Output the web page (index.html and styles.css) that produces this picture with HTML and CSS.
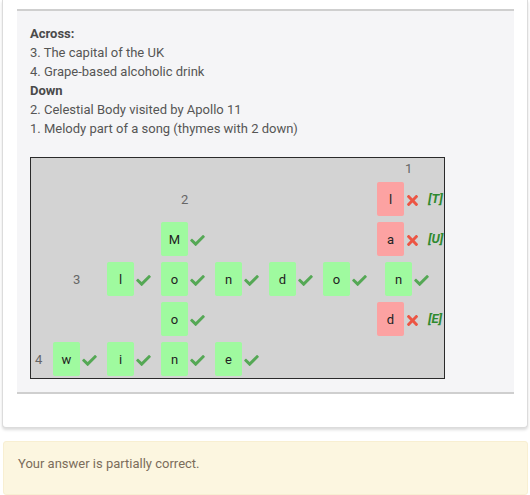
FILE: index.html
```html
<!DOCTYPE html>
<html>
<head>
<meta charset="utf-8">
<link rel="stylesheet" href="styles.css">
</head>
<body>
<div class="card">
  <div class="panel">
    <div class="clues">
      <div class="head">Across:</div>
      <div>3. The capital of the UK</div>
      <div>4. Grape-based alcoholic drink</div>
      <div class="head">Down</div>
      <div>2. Celestial Body visited by Apollo 11</div>
      <div>1. Melody part of a song (thymes with 2 down)</div>
    </div>
    <div class="board">
      <!-- row 0 -->
      <div class="cell r0 c7"><span class="num n1">1</span></div>
      <!-- row 1 -->
      <div class="cell r1 c3"><span class="num n2">2</span></div>
      <div class="cell r1 c7"><span class="box bad">l</span><svg class="x" viewBox="0 80 352 352"><path d="M242.72 256l100.07-100.07c12.28-12.28 12.28-32.19 0-44.48l-22.24-22.24c-12.28-12.28-32.19-12.28-44.48 0L176 189.28 75.930 89.21c-12.28-12.28-32.19-12.28-44.48 0L9.21 111.45c-12.28 12.28-12.28 32.19 0 44.48L109.28 256 9.21 356.070c-12.28 12.28-12.28 32.19 0 44.48l22.24 22.24c12.28 12.28 32.2 12.28 44.48 0L176 322.72l100.07 100.07c12.28 12.28 32.2 12.28 44.48 0l22.24-22.24c12.28-12.28 12.28-32.19 0-44.48L242.72 256z"/></svg><span class="fix">[T]</span></div>
      <!-- row 2 -->
      <div class="cell r2 c3"><span class="box ok">M</span><svg class="ck" viewBox="0 64 512 384"><path d="M173.9 439.4l-166.4-166.4c-10-10-10-26.2 0-36.2l36.2-36.2c10-10 26.2-10 36.2 0L192 312.7 432.1 72.6c10-10 26.2-10 36.2 0l36.2 36.2c10 10 10 26.2 0 36.2l-294.4 294.4c-10 10-26.2 10-36.2 0z"/></svg></div>
      <div class="cell r2 c7"><span class="box bad">a</span><svg class="x" viewBox="0 80 352 352"><path d="M242.72 256l100.07-100.07c12.28-12.28 12.28-32.19 0-44.48l-22.24-22.24c-12.28-12.28-32.19-12.28-44.48 0L176 189.28 75.930 89.21c-12.28-12.28-32.19-12.28-44.48 0L9.21 111.45c-12.28 12.28-12.28 32.19 0 44.48L109.28 256 9.21 356.070c-12.28 12.28-12.28 32.19 0 44.48l22.24 22.24c12.28 12.28 32.2 12.28 44.48 0L176 322.72l100.07 100.07c12.28 12.28 32.2 12.28 44.48 0l22.24-22.24c12.28-12.28 12.28-32.19 0-44.48L242.72 256z"/></svg><span class="fix">[U]</span></div>
      <!-- row 3 -->
      <div class="cell r3 c1"><span class="num n3">3</span></div>
      <div class="cell r3 c2"><span class="box ok">l</span><svg class="ck" viewBox="0 64 512 384"><path d="M173.9 439.4l-166.4-166.4c-10-10-10-26.2 0-36.2l36.2-36.2c10-10 26.2-10 36.2 0L192 312.7 432.1 72.6c10-10 26.2-10 36.2 0l36.2 36.2c10 10 10 26.2 0 36.2l-294.4 294.4c-10 10-26.2 10-36.2 0z"/></svg></div>
      <div class="cell r3 c3"><span class="box ok">o</span><svg class="ck" viewBox="0 64 512 384"><path d="M173.9 439.4l-166.4-166.4c-10-10-10-26.2 0-36.2l36.2-36.2c10-10 26.2-10 36.2 0L192 312.7 432.1 72.6c10-10 26.2-10 36.2 0l36.2 36.2c10 10 10 26.2 0 36.2l-294.4 294.4c-10 10-26.2 10-36.2 0z"/></svg></div>
      <div class="cell r3 c4"><span class="box ok">n</span><svg class="ck" viewBox="0 64 512 384"><path d="M173.9 439.4l-166.4-166.4c-10-10-10-26.2 0-36.2l36.2-36.2c10-10 26.2-10 36.2 0L192 312.7 432.1 72.6c10-10 26.2-10 36.2 0l36.2 36.2c10 10 10 26.2 0 36.2l-294.4 294.4c-10 10-26.2 10-36.2 0z"/></svg></div>
      <div class="cell r3 c5"><span class="box ok">d</span><svg class="ck" viewBox="0 64 512 384"><path d="M173.9 439.4l-166.4-166.4c-10-10-10-26.2 0-36.2l36.2-36.2c10-10 26.2-10 36.2 0L192 312.7 432.1 72.6c10-10 26.2-10 36.2 0l36.2 36.2c10 10 10 26.2 0 36.2l-294.4 294.4c-10 10-26.2 10-36.2 0z"/></svg></div>
      <div class="cell r3 c6"><span class="box ok">o</span><svg class="ck" viewBox="0 64 512 384"><path d="M173.9 439.4l-166.4-166.4c-10-10-10-26.2 0-36.2l36.2-36.2c10-10 26.2-10 36.2 0L192 312.7 432.1 72.6c10-10 26.2-10 36.2 0l36.2 36.2c10 10 10 26.2 0 36.2l-294.4 294.4c-10 10-26.2 10-36.2 0z"/></svg></div>
      <div class="cell r3 c7 shift"><span class="box ok">n</span><svg class="ck" viewBox="0 64 512 384"><path d="M173.9 439.4l-166.4-166.4c-10-10-10-26.2 0-36.2l36.2-36.2c10-10 26.2-10 36.2 0L192 312.7 432.1 72.6c10-10 26.2-10 36.2 0l36.2 36.2c10 10 10 26.2 0 36.2l-294.4 294.4c-10 10-26.2 10-36.2 0z"/></svg></div>
      <!-- row 4 -->
      <div class="cell r4 c3"><span class="box ok">o</span><svg class="ck" viewBox="0 64 512 384"><path d="M173.9 439.4l-166.4-166.4c-10-10-10-26.2 0-36.2l36.2-36.2c10-10 26.2-10 36.2 0L192 312.7 432.1 72.6c10-10 26.2-10 36.2 0l36.2 36.2c10 10 10 26.2 0 36.2l-294.4 294.4c-10 10-26.2 10-36.2 0z"/></svg></div>
      <div class="cell r4 c7"><span class="box bad">d</span><svg class="x" viewBox="0 80 352 352"><path d="M242.72 256l100.07-100.07c12.28-12.28 12.28-32.19 0-44.48l-22.24-22.24c-12.28-12.280-32.19-12.28-44.48 0L176 189.28 75.930 89.21c-12.28-12.28-32.19-12.28-44.48 0L9.21 111.45c-12.28 12.28-12.28 32.19 0 44.48L109.28 256 9.21 356.070c-12.28 12.28-12.28 32.19 0 44.48l22.24 22.24c12.28 12.28 32.2 12.28 44.48 0L176 322.72l100.07 100.07c12.28 12.28 32.2 12.28 44.48 0l22.24-22.24c12.28-12.28 12.28-32.19 0-44.48L242.72 256z"/></svg><span class="fix">[E]</span></div>
      <!-- row 5 -->
      <div class="cell r5 c0"><span class="num n4">4</span></div>
      <div class="cell r5 c1"><span class="box ok">w</span><svg class="ck" viewBox="0 64 512 384"><path d="M173.9 439.4l-166.4-166.4c-10-10-10-26.2 0-36.2l36.2-36.2c10-10 26.2-10 36.2 0L192 312.7 432.1 72.6c10-10 26.2-10 36.2 0l36.2 36.2c10 10 10 26.2 0 36.2l-294.4 294.4c-10 10-26.2 10-36.2 0z"/></svg></div>
      <div class="cell r5 c2"><span class="box ok">i</span><svg class="ck" viewBox="0 64 512 384"><path d="M173.9 439.4l-166.4-166.4c-10-10-10-26.2 0-36.2l36.2-36.2c10-10 26.2-10 36.2 0L192 312.7 432.1 72.6c10-10 26.2-10 36.2 0l36.2 36.2c10 10 10 26.2 0 36.2l-294.4 294.4c-10 10-26.2 10-36.2 0z"/></svg></div>
      <div class="cell r5 c3"><span class="box ok">n</span><svg class="ck" viewBox="0 64 512 384"><path d="M173.9 439.4l-166.4-166.4c-10-10-10-26.2 0-36.2l36.2-36.2c10-10 26.2-10 36.2 0L192 312.7 432.1 72.6c10-10 26.2-10 36.2 0l36.2 36.2c10 10 10 26.2 0 36.2l-294.4 294.4c-10 10-26.2 10-36.2 0z"/></svg></div>
      <div class="cell r5 c4"><span class="box ok">e</span><svg class="ck" viewBox="0 64 512 384"><path d="M173.9 439.4l-166.4-166.4c-10-10-10-26.2 0-36.2l36.2-36.2c10-10 26.2-10 36.2 0L192 312.7 432.1 72.6c10-10 26.2-10 36.2 0l36.2 36.2c10 10 10 26.2 0 36.2l-294.4 294.4c-10 10-26.2 10-36.2 0z"/></svg></div>
    </div>
  </div>
</div>
<div class="outcome">Your answer is partially correct.</div>
</body>
</html>
```
FILE: styles.css
```css
* { box-sizing: border-box; }
html, body { margin: 0; padding: 0; background: #fff; }
body {
  font-family: Roboto, "Liberation Sans", sans-serif;
  font-size: 13px;
  color: #555;
  padding: 0 2px 0 2px;
}
.card {
  background: #fff;
  border: 1px solid #dcdcdc;
  border-top: none;
  border-radius: 0 0 4px 4px;
  box-shadow: 0 2px 3px rgba(0,0,0,0.14);
  padding: 9px 13px 32px 14px;
  height: 428px;
}
.panel {
  background: #f5f5f7;
  border-top: 2px solid #cfcfcf;
  border-bottom: 2px solid #cfcfcf;
  padding: 13px 13px 13px 13px;
}
.clues { line-height: 19px; color: #555; }
.head { font-weight: 700; color: #4a4a4a; }
.board {
  margin-top: 19px;
  width: 415px;
  height: 222px;
  background: #d3d3d3;
  border: 1px solid #2a2a2a;
  overflow: hidden;
  display: grid;
  grid-template-columns: 22px repeat(6, 54px) 67px;
  grid-template-rows: 24px 40px 40px 40px 40px 36px;
}
.cell { display: flex; align-items: center; height: 34px; white-space: nowrap; }
.r0 { grid-row: 1; height: 24px; }
.r1 { grid-row: 2; } .r2 { grid-row: 3; } .r3 { grid-row: 4; }
.r4 { grid-row: 5; } .r5 { grid-row: 6; }
.c0 { grid-column: 1; } .c1 { grid-column: 2; } .c2 { grid-column: 3; }
.c3 { grid-column: 4; } .c4 { grid-column: 5; } .c5 { grid-column: 6; }
.c6 { grid-column: 7; } .c7 { grid-column: 8; }
.shift { padding-left: 8px; }
.num { color: #666; font-size: 13px; }
.n1 { margin-left: 28px; margin-top: -4px; }
.n2 { margin-left: 20px; }
.n3 { margin-left: 20px; }
.n4 { margin-left: 4px; }
.box {
  width: 27px;
  height: 34px;
  display: flex;
  align-items: center;
  justify-content: center;
  border-radius: 2px;
  color: #222;
  font-size: 13px;
}
.ok { background: #9ffa9f; }
.bad { background: #fca2a2; }
.ck { width: 15px; height: 11px; fill: #55a855; margin-left: 2px; margin-top: 2px; flex: none; }
.x { width: 11px; height: 11px; fill: #ec5544; margin-left: 3px; margin-top: 2px; flex: none; }
.fix { font-style: italic; font-weight: 700; color: #2f8a2f; font-size: 13px; margin-left: 10px; margin-top: -2px; }
.outcome {
  margin: 13px 0 0 1px;
  background: #fcf6e0;
  border: 1px solid #f8efd2;
  border-radius: 3px;
  height: 54px;
  padding: 13px 14px 0;
  line-height: 18px;
  color: #7b6d5b;
  font-size: 13px;
}
```
